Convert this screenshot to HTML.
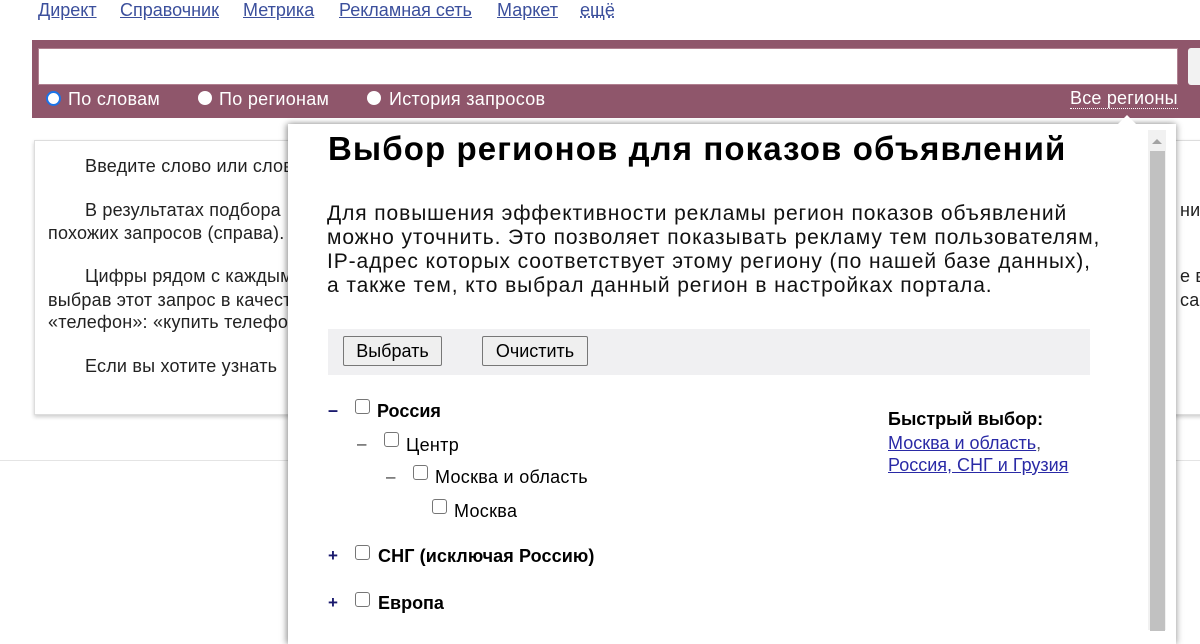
<!DOCTYPE html>
<html><head><meta charset="utf-8"><style>
body{margin:0;width:1200px;height:628px;overflow:hidden;background:#fff;font-family:"Liberation Sans",Arial,sans-serif;position:relative}
.a{position:absolute}
.nav a{color:#3b4f9c;text-decoration:underline;font-size:18px;position:absolute;top:0}
.t{font-size:18px;color:#222;line-height:21px;letter-spacing:0.2px;white-space:nowrap}
.cb{display:inline-block;width:13px;height:13px;border:1px solid #767676;border-radius:3px;background:#fff;position:absolute}
</style></head><body>
<div class="nav">
<a style="left:38px">Директ</a><a style="left:120px">Справочник</a><a style="left:243px">Метрика</a><a style="left:339px">Рекламная сеть</a><a style="left:497px">Маркет</a><a style="left:580px;text-decoration:underline dotted">ещё</a>
</div>
<div class="a" style="left:32px;top:40px;width:1168px;height:78px;background:#8f566b"></div>
<div class="a" style="left:38px;top:48px;width:1140px;height:37px;background:#fff;border:1px solid #b08090;box-sizing:border-box"></div>
<div class="a" style="left:1188px;top:48px;width:20px;height:37px;background:#f2f2f2;border-radius:3px"></div>
<div class="a" style="left:46px;top:91px;width:11px;height:11px;border-radius:50%;background:#fff;border:2px solid #1a73e8"></div>
<div class="a" style="left:68px;top:89px;color:#fff;font-size:18px;letter-spacing:0.3px">По словам</div>
<div class="a" style="left:198px;top:91px;width:14px;height:14px;border-radius:50%;background:#fff"></div>
<div class="a" style="left:219px;top:89px;color:#fff;font-size:18px;letter-spacing:0.3px">По регионам</div>
<div class="a" style="left:367px;top:91px;width:14px;height:14px;border-radius:50%;background:#fff"></div>
<div class="a" style="left:389px;top:89px;color:#fff;font-size:18px;letter-spacing:0.3px">История запросов</div>
<div class="a" style="left:1070px;top:88px;color:#fff;font-size:18px;border-bottom:1px dotted #fff;line-height:20px;letter-spacing:0.2px">Все регионы</div>

<div class="a" style="left:34px;top:140px;width:1180px;height:273px;border:1px solid #ddd;box-shadow:0 2px 4px rgba(0,0,0,.2)"></div>
<div class="a" style="left:0;top:460px;width:1200px;height:1px;background:#e4e4e4"></div>
<div class="a t" style="left:85px;top:156px;">Введите слово или словосочетание</div>
<div class="a t" style="left:85px;top:200px;">В результатах подбора</div>
<div class="a t" style="left:48px;top:223px;">похожих запросов (справа).</div>
<div class="a t" style="left:85px;top:266px;">Цифры рядом с каждым</div>
<div class="a t" style="left:48px;top:290px;">выбрав этот запрос в качестве</div>
<div class="a t" style="left:48px;top:312px;">«телефон»: «купить телефон»</div>
<div class="a t" style="left:85px;top:356px;">Если вы хотите узнать</div>
<div class="a t" style="left:1180px;top:200px;">ни</div>
<div class="a t" style="left:1180px;top:266px;">е в</div>
<div class="a t" style="left:1180px;top:290px;">са</div>

<div class="a" style="left:288px;top:124px;width:888px;height:520px;background:#fff;box-shadow:-2px 0 6px rgba(0,0,0,.35),2px 0 6px rgba(0,0,0,.2)"></div>
<div class="a" style="left:1118px;top:115px;width:0;height:0;border-left:9px solid transparent;border-right:9px solid transparent;border-bottom:9px solid #fff"></div>
<div class="a" style="left:1148px;top:130px;width:18px;height:500px;background:#f1f1f1"></div>
<div class="a" style="left:1152px;top:139px;width:0;height:0;border-left:5px solid transparent;border-right:5px solid transparent;border-bottom:5px solid #a3a3a3"></div>
<div class="a" style="left:1150px;top:151px;width:15px;height:480px;background:#c1c1c1"></div>

<div class="a" style="left:328px;top:130px;font-size:33px;letter-spacing:1.1px;font-weight:bold;color:#000;white-space:nowrap">Выбор регионов для показов объявлений</div>
<div class="a" style="left:327px;top:202px;font-size:21px;letter-spacing:0.9px;line-height:24px;color:#111;width:820px;white-space:nowrap">Для повышения эффективности рекламы регион показов объявлений<br>можно уточнить. Это позволяет показывать рекламу тем пользователям,<br>IP-адрес которых соответствует этому региону (по нашей базе данных),<br>а также тем, кто выбрал данный регион в настройках портала.</div>
<div class="a" style="left:328px;top:329px;width:762px;height:46px;background:#f0f0f2"></div>
<div class="a" style="left:343px;top:336px;width:99px;height:30px;border:1px solid #777;border-radius:2px;background:#efefef;box-sizing:border-box;font-size:18px;text-align:center;line-height:28px">Выбрать</div>
<div class="a" style="left:482px;top:336px;width:106px;height:30px;border:1px solid #777;border-radius:2px;background:#efefef;box-sizing:border-box;font-size:18px;text-align:center;line-height:28px">Очистить</div>

<div class="a" style="left:328px;top:400px;font-size:18px;font-weight:bold;color:#1a1a6e">–</div>
<span class="cb" style="left:355px;top:399px"></span>
<div class="a" style="left:377px;top:401px;font-size:18px;font-weight:bold">Россия</div>
<div class="a" style="left:357px;top:434px;font-size:17px;color:#333">–</div>
<span class="cb" style="left:384px;top:432px"></span>
<div class="a" style="left:406px;top:435px;font-size:18px;letter-spacing:0.3px">Центр</div>
<div class="a" style="left:386px;top:467px;font-size:17px;color:#333">–</div>
<span class="cb" style="left:413px;top:465px"></span>
<div class="a" style="left:435px;top:467px;font-size:18px;letter-spacing:0.3px">Москва и область</div>
<span class="cb" style="left:432px;top:499px"></span>
<div class="a" style="left:454px;top:501px;font-size:18px;letter-spacing:0.3px">Москва</div>
<div class="a" style="left:328px;top:546px;font-size:17px;font-weight:bold;color:#1a1a6e">+</div>
<span class="cb" style="left:355px;top:545px"></span>
<div class="a" style="left:378px;top:546px;font-size:18px;font-weight:bold;letter-spacing:0.1px">СНГ (исключая Россию)</div>
<div class="a" style="left:328px;top:593px;font-size:17px;font-weight:bold;color:#1a1a6e">+</div>
<span class="cb" style="left:355px;top:592px"></span>
<div class="a" style="left:378px;top:593px;font-size:18px;font-weight:bold">Европа</div>

<div class="a" style="left:888px;top:409px;font-size:18px;font-weight:bold">Быстрый выбор:</div>
<div class="a" style="left:888px;top:432px;font-size:18px;line-height:22px;color:#555"><span style="color:#2a2aa6;text-decoration:underline">Москва и область</span>,<br><span style="color:#2a2aa6;text-decoration:underline">Россия, СНГ и Грузия</span></div>
</body></html>
